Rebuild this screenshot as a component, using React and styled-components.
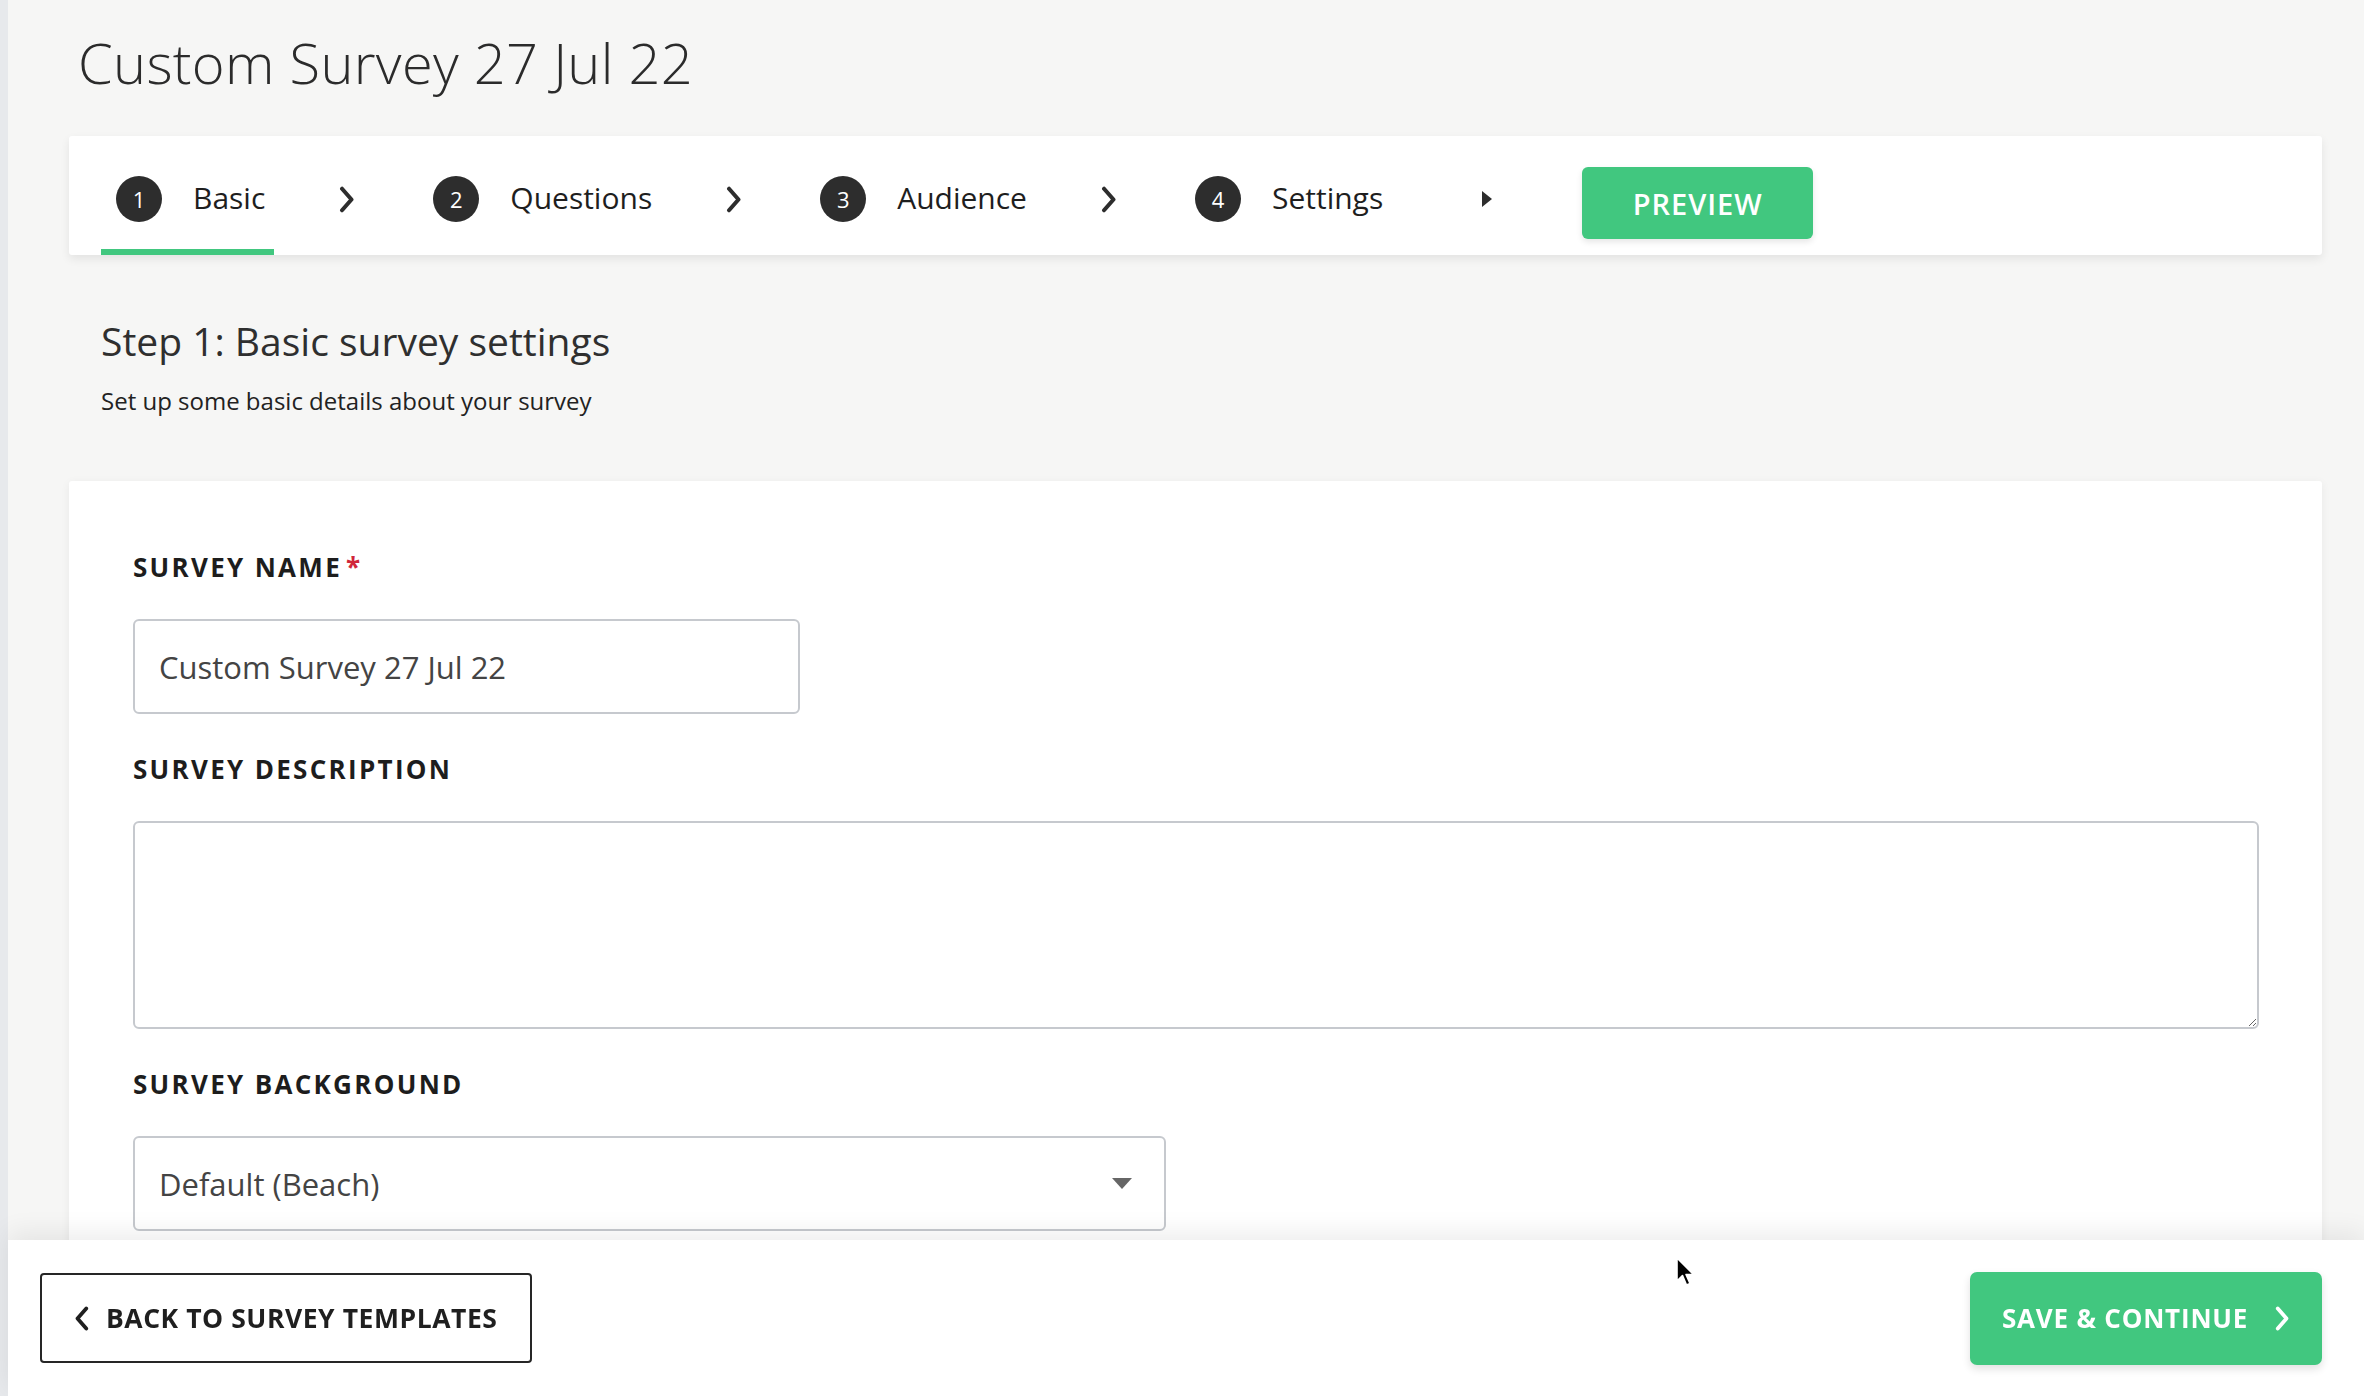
import React from "react";
import styled, { createGlobalStyle } from "styled-components";

const GlobalStyle = createGlobalStyle`
  html, body {
    margin: 0;
    padding: 0;
    background: #f6f6f5;
  }
  body {
    font-family: "Open Sans", "Noto Sans", sans-serif;
    color: #222;
  }
  * {
    box-sizing: border-box;
  }
`;

const green = "#41c77f";

const Page = styled.div`
  min-height: 100vh;
  border-left: 8px solid #e7e9ec;
  padding: 28px 42px 200px 61px;
`;

const Title = styled.h1`
  margin: 0 0 40px 9px;
  font-size: 56px;
  line-height: 68px;
  font-weight: 300;
  color: #2b2b2b;
  letter-spacing: 0.3px;
`;

const StepBar = styled.nav`
  display: flex;
  align-items: stretch;
  height: 119px;
  padding-left: 32px;
  background: #fff;
  border-radius: 3px;
  box-shadow: 0 4px 10px rgba(0, 0, 0, 0.08);
`;

const Tab = styled.div`
  display: flex;
  align-items: center;
  padding: 13px 9px 0 15px;
  border-bottom: 6px solid ${(p) => (p.$active ? green : "transparent")};
`;

const StepNumber = styled.span`
  display: flex;
  align-items: center;
  justify-content: center;
  width: 46px;
  height: 46px;
  border-radius: 50%;
  background: #2d2d2d;
  color: #fff;
  font-size: 22px;
  line-height: 1;
  margin-right: 31px;
`;

const TabLabel = styled.span`
  font-size: 30px;
  color: #1e1e1e;
  margin-top: -4px;
`;

const Separator = styled.span`
  display: flex;
  align-items: center;
  justify-content: center;
  width: 20px;
  margin: 13px ${(p) => (p.$wide ? "85px" : "62px")} 6px;
  color: #2d2d2d;
`;

const PreviewButton = styled.button`
  align-self: center;
  margin-top: 15px;
  width: 231px;
  height: 72px;
  border: none;
  border-radius: 6px;
  background: ${green};
  color: #fff;
  font-family: inherit;
  font-size: 29px;
  font-weight: 600;
  letter-spacing: 1px;
  box-shadow: 0 3px 6px rgba(0, 0, 0, 0.1);
`;

const Intro = styled.header`
  padding: 62px 0 0 32px;
`;

const StepHeading = styled.h2`
  margin: 0;
  font-size: 39px;
  line-height: 48px;
  font-weight: 400;
  color: #2f2f2f;
`;

const StepText = styled.p`
  margin: 20px 0 0;
  font-size: 24px;
  line-height: 32px;
  color: #222;
`;

const FormCard = styled.section`
  margin-top: 64px;
  background: #fff;
  border-radius: 3px;
  box-shadow: 0 2px 10px rgba(0, 0, 0, 0.06);
  padding: 68px 63px 120px 64px;
`;

const Field = styled.div`
  display: flex;
  flex-direction: column;
  & + & {
    margin-top: 37px;
  }
`;

const Label = styled.label`
  font-size: 26px;
  line-height: 36px;
  font-weight: 700;
  letter-spacing: 2.3px;
  color: #1d1d1d;
  margin-bottom: 34px;
`;

const Required = styled.span`
  color: #d0263a;
  margin-left: 4px;
`;

const TextInput = styled.input`
  width: 667px;
  height: 95px;
  padding: 0 24px;
  border: 2px solid #c6c9ce;
  border-radius: 6px;
  background: #fff;
  font-family: inherit;
  font-size: 31px;
  color: #444;
  outline: none;
`;

const TextArea = styled.textarea`
  width: 100%;
  height: 208px;
  padding: 20px 24px;
  border: 2px solid #c6c9ce;
  border-radius: 6px;
  background: #fff;
  font-family: inherit;
  font-size: 31px;
  color: #444;
  outline: none;
`;

const SelectBox = styled.div`
  display: flex;
  align-items: center;
  justify-content: space-between;
  width: 1033px;
  height: 95px;
  padding: 0 32px 0 24px;
  border: 2px solid #c6c9ce;
  border-radius: 6px;
  background: #fff;
  font-size: 31px;
  color: #444;
`;

const Footer = styled.footer`
  position: fixed;
  left: 8px;
  right: 0;
  bottom: 0;
  height: 156px;
  display: flex;
  align-items: center;
  justify-content: space-between;
  padding: 0 42px 0 32px;
  background: #fff;
  box-shadow: 0 -8px 24px rgba(0, 0, 0, 0.07);
`;

const BackButton = styled.button`
  display: flex;
  align-items: center;
  gap: 16px;
  width: 492px;
  height: 90px;
  padding: 0 0 0 33px;
  border: 2px solid #262626;
  border-radius: 4px;
  background: #fff;
  color: #1f1f1f;
  font-family: inherit;
  font-size: 26.5px;
  font-weight: 700;
  letter-spacing: 0.55px;
`;

const SaveButton = styled.button`
  display: flex;
  align-items: center;
  gap: 26px;
  width: 352px;
  height: 93px;
  padding: 0 0 0 32px;
  border: none;
  border-radius: 7px;
  background: ${green};
  color: #fff;
  font-family: inherit;
  font-size: 26px;
  font-weight: 700;
  letter-spacing: 0.8px;
  box-shadow: 0 4px 8px rgba(0, 0, 0, 0.12);
`;

const Cursor = styled.svg`
  position: absolute;
  left: 1667px;
  top: 16px;
  pointer-events: none;
`;

const Chevron = ({ dir = "right", size = 27, stroke = 4 }) => (
  <svg width={size * 0.6} height={size} viewBox="0 0 12 20" fill="none">
    <path
      d={dir === "right" ? "M3 2 L10 10 L3 18" : "M9 2 L2 10 L9 18"}
      stroke="currentColor"
      strokeWidth={stroke * 0.75}
      strokeLinecap="round"
      strokeLinejoin="round"
    />
  </svg>
);

const Caret = () => (
  <svg width="12" height="16" viewBox="0 0 12 16">
    <path d="M1 0 L11 8 L1 16 Z" fill="#2d2d2d" />
  </svg>
);

const steps = [
  { n: 1, label: "Basic" },
  { n: 2, label: "Questions" },
  { n: 3, label: "Audience" },
  { n: 4, label: "Settings" },
];

export default function App() {
  return (
    <>
      <GlobalStyle />
      <Page>
        <Title>Custom Survey 27 Jul 22</Title>

        <StepBar>
          {steps.map((s, i) => (
            <React.Fragment key={s.n}>
              <Tab $active={i === 0}>
                <StepNumber>{s.n}</StepNumber>
                <TabLabel>{s.label}</TabLabel>
              </Tab>
              <Separator $wide={i === steps.length - 1}>
                {i === steps.length - 1 ? <Caret /> : <Chevron />}
              </Separator>
            </React.Fragment>
          ))}
          <PreviewButton>PREVIEW</PreviewButton>
        </StepBar>

        <Intro>
          <StepHeading>Step 1: Basic survey settings</StepHeading>
          <StepText>Set up some basic details about your survey</StepText>
        </Intro>

        <FormCard>
          <Field>
            <Label>
              SURVEY NAME<Required>*</Required>
            </Label>
            <TextInput defaultValue="Custom Survey 27 Jul 22" />
          </Field>
          <Field>
            <Label>SURVEY DESCRIPTION</Label>
            <TextArea />
          </Field>
          <Field>
            <Label>SURVEY BACKGROUND</Label>
            <SelectBox>
              <span>Default (Beach)</span>
              <svg width="20" height="11" viewBox="0 0 20 11">
                <path d="M0 0 H20 L10 11 Z" fill="#666" />
              </svg>
            </SelectBox>
          </Field>
        </FormCard>
      </Page>

      <Footer>
        <BackButton>
          <Chevron dir="left" size={25} stroke={4} />
          BACK TO SURVEY TEMPLATES
        </BackButton>
        <Cursor width="22" height="32" viewBox="0 0 22 32">
          <path
            d="M2 2 L2 25 L7.5 19.5 L11.5 29 L15 27.5 L11 18.5 L18.5 18.5 Z"
            fill="#000"
            stroke="#fff"
            strokeWidth="1.6"
            strokeLinejoin="round"
          />
        </Cursor>
        <SaveButton>
          SAVE &amp; CONTINUE
          <Chevron size={25} stroke={4} />
        </SaveButton>
      </Footer>
    </>
  );
}
